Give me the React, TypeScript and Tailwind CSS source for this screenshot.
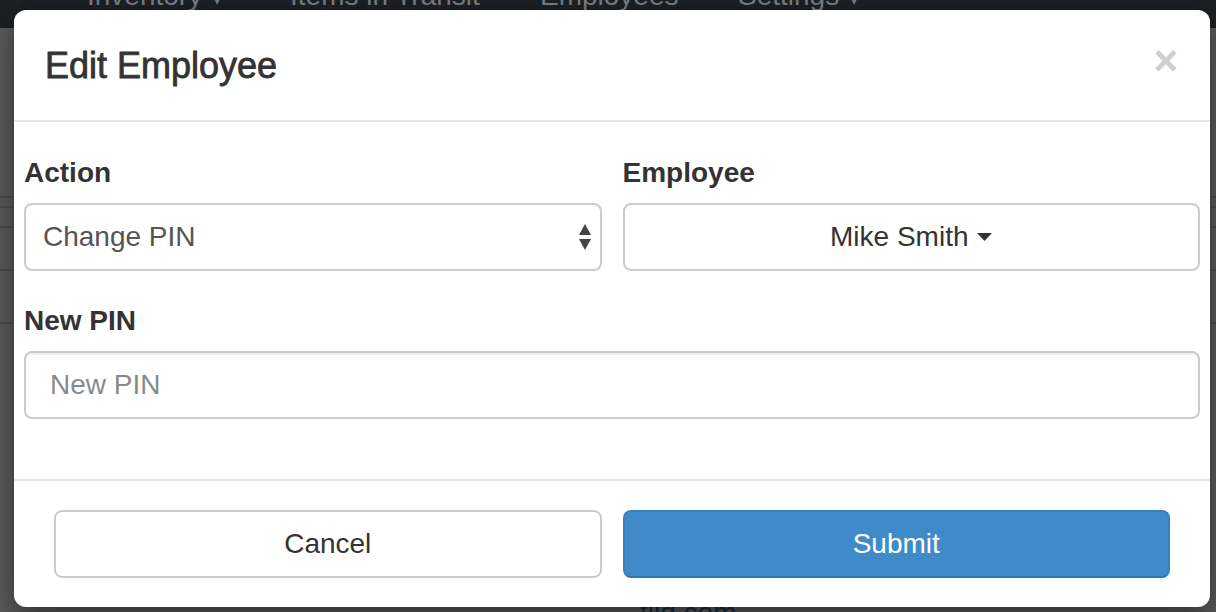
import React from "react";

const font = { fontFamily: '"Liberation Sans", Arial, sans-serif' };

function SelectArrows() {
  return (
    <svg width="14" height="26" viewBox="0 0 14 26" className="shrink-0">
      <path d="M7,0 L13,11 L1,11Z" fill="#444" />
      <path d="M1,15 L13,15 L7,26Z" fill="#444" />
    </svg>
  );
}

function Caret() {
  return (
    <svg width="15" height="8" viewBox="0 0 15 8" className="ml-[9px] shrink-0">
      <path d="M0,0 L15,0 L7.5,8Z" fill="#333" />
    </svg>
  );
}

export default function App() {
  return (
    <div className="relative h-[612px] w-[1216px] overflow-hidden bg-[#5c5c5c]" style={font}>
      {/* page behind the modal */}
      <div className="h-[48px] bg-[#1d2024]">
        <div className="-mt-[20px] flex items-start text-[28px] leading-[32px] text-[#7c7f83]">
          <span className="ml-[14px] w-[73px] text-[16px]">▾</span>
          <span className="w-[203px]">Inventory ▾</span>
          <span className="w-[250px]">Items in Transit</span>
          <span className="w-[198px]">Employees</span>
          <span>Settings ▾</span>
        </div>
      </div>
      <div className="flex flex-col">
        <div className="h-[170px] border-b-2 border-[#4e4e4e]" />
        <div className="h-[10px] border-b-2 border-[#4e4e4e]" />
        <div className="h-[20px] border-b-2 border-[#4e4e4e]" />
        <div className="h-[43px] border-b-2 border-[#4e4e4e]" />
        <div className="h-[53px] border-b-2 border-[#4e4e4e]" />
      </div>
      <div className="absolute left-[640px] top-[597px] text-[28px] leading-[32px] text-[#1a2d45]">tiid.com</div>

      {/* modal */}
      <div className="absolute left-[14px] top-[10px] w-[1196px] rounded-[12px] bg-white shadow-[0_10px_30px_rgba(0,0,0,0.5)]">
        <div className="flex items-center justify-between border-b-2 border-[#e5e5e5] px-[31px] pb-[29px] pt-[30px]">
          <h4 className="text-[36px] font-medium leading-[51px] text-[#333]" style={{ WebkitTextStroke: "0.8px #333" }}>
            Edit Employee
          </h4>
          <span className="-mt-[10px] mr-[1px] text-[42px] font-bold leading-[42px] text-[#cfcfcf]">×</span>
        </div>

        <div className="px-[10px] pb-[30px] pt-[31px]">
          <div className="grid grid-cols-2 gap-x-[21px]">
            <div className="mb-[30px]">
              <label className="mb-[10px] block text-[28px] font-bold leading-[40px] text-[#333]">Action</label>
              <div className="flex h-[68px] items-center justify-between rounded-[8px] border-2 border-[#ccc] pl-[17px] pr-[8px] text-[28px] text-[#555]">
                <span>Change PIN</span>
                <SelectArrows />
              </div>
            </div>
            <div className="mb-[30px]">
              <label className="mb-[10px] block text-[28px] font-bold leading-[40px] text-[#333]">Employee</label>
              <div className="flex h-[68px] items-center justify-center rounded-[8px] border-2 border-[#ccc] text-[28px] text-[#333]">
                <span>Mike Smith</span>
                <Caret />
              </div>
            </div>
          </div>
          <div className="mb-[30px]">
            <label className="mb-[10px] block text-[28px] font-bold leading-[40px] text-[#333]">New PIN</label>
            <div className="flex h-[68px] items-center rounded-[8px] border-2 border-[#ccc] px-[24px] text-[28px] text-[#8a8a8a] shadow-[inset_0_2px_2px_rgba(0,0,0,0.075)]">
              New PIN
            </div>
          </div>
        </div>

        <div className="grid grid-cols-2 gap-x-[21px] border-t-2 border-[#e5e5e5] px-[40px] pb-[29px] pt-[29px]">
          <button className="h-[68px] rounded-[8px] border-2 border-[#ccc] bg-white text-[28px] text-[#333]">Cancel</button>
          <button className="h-[68px] rounded-[8px] border-2 border-[#3a80bc] border-b-[#3076b0] bg-[#3f8bc9] text-[28px] text-white">
            Submit
          </button>
        </div>
      </div>
    </div>
  );
}
